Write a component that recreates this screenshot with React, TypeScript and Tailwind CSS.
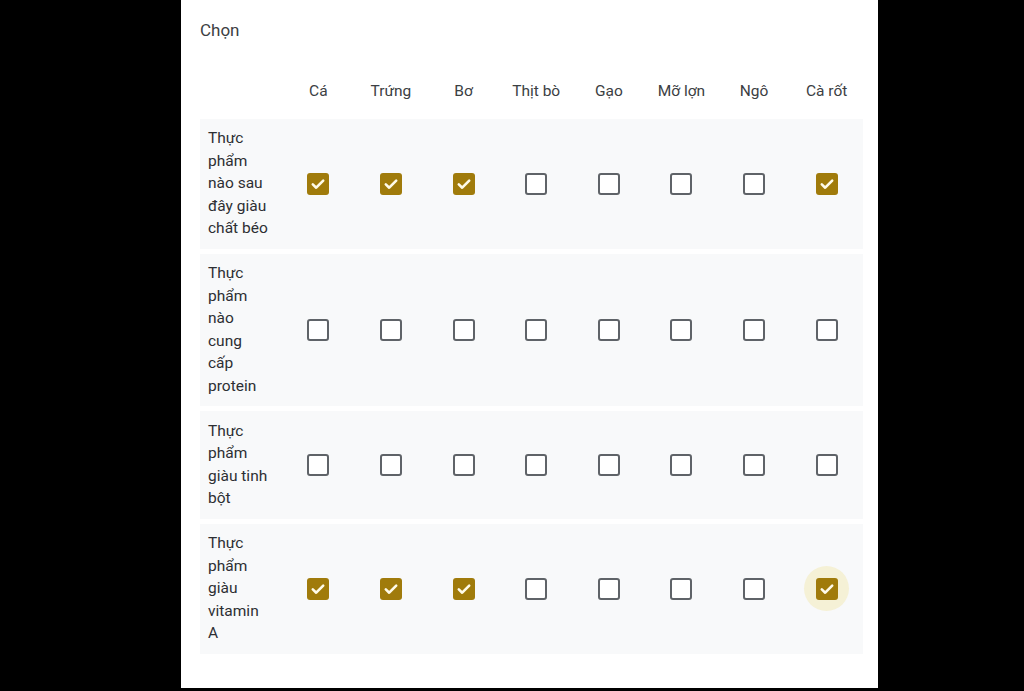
import React from 'react';

const columns = ['Cá', 'Trứng', 'Bơ', 'Thịt bò', 'Gạo', 'Mỡ lợn', 'Ngô', 'Cà rốt'];

interface Row {
  label: string[];
  checked: boolean[];
}

const rows: Row[] = [
  {
    label: ['Thực', 'phẩm', 'nào sau', 'đây giàu', 'chất béo'],
    checked: [true, true, true, false, false, false, false, true],
  },
  {
    label: ['Thực', 'phẩm', 'nào', 'cung', 'cấp', 'protein'],
    checked: [false, false, false, false, false, false, false, false],
  },
  {
    label: ['Thực', 'phẩm', 'giàu tinh', 'bột'],
    checked: [false, false, false, false, false, false, false, false],
  },
  {
    label: ['Thực', 'phẩm', 'giàu', 'vitamin', 'A'],
    checked: [true, true, true, false, false, false, false, true],
  },
];

const Checkbox = ({ checked, focused }: { checked: boolean; focused?: boolean }) => (
  <div className="relative flex items-center justify-center w-[22px] h-[22px]">
    {focused && (
      <span className="absolute w-[45px] h-[45px] rounded-full bg-[#f5f1d6] -left-[11.5px] -top-[11.5px]" />
    )}
    {checked ? (
      <div className="relative w-[22px] h-[22px] rounded-[3px] bg-[#a07b0b] flex items-center justify-center">
        <svg width="18" height="18" viewBox="0 0 18 18" fill="none">
          <path d="M3.8 9.4l3.4 3.3L14.2 5.6" stroke="#fffbea" strokeWidth="2.6" strokeLinecap="round" strokeLinejoin="round" />
        </svg>
      </div>
    ) : (
      <div className="relative w-[22px] h-[22px] rounded-[3px] border-2 border-[#5f6368] bg-white" />
    )}
  </div>
);

export default function App() {
  return (
    <div className="w-[1024px] h-[691px] bg-black overflow-hidden" style={{ fontFamily: 'Roboto, "Noto Sans", sans-serif' }}>
      <div className="ml-[181px] w-[697px] h-[688px] bg-white pl-[19px] pt-[18px]">
        <div className="text-[17px] leading-[24px] text-[#3c4043]">Chọn</div>

        <div className="grid grid-cols-[82px_repeat(8,1fr)] w-[663px] mt-[38px] mb-[16px] text-[15.5px] leading-[22.5px] text-[#3c4043]">
          <div />
          {columns.map((c) => (
            <div key={c} className="text-center whitespace-nowrap">{c}</div>
          ))}
        </div>

        <div className="flex flex-col gap-[5px] w-[663px]">
          {rows.map((row, ri) => (
            <div key={ri} className="grid grid-cols-[82px_repeat(8,1fr)] items-center bg-[#f8f9fa] py-[8.75px]">
              <div className="pl-[8px] text-[15.5px] leading-[22.5px] text-[#2d2f33]">
                {row.label.map((l, li) => (
                  <div key={li} className="whitespace-nowrap">{l}</div>
                ))}
              </div>
              {row.checked.map((c, ci) => (
                <div key={ci} className="flex justify-center">
                  <Checkbox checked={c} focused={ri === 3 && ci === 7} />
                </div>
              ))}
            </div>
          ))}
        </div>
      </div>
    </div>
  );
}
